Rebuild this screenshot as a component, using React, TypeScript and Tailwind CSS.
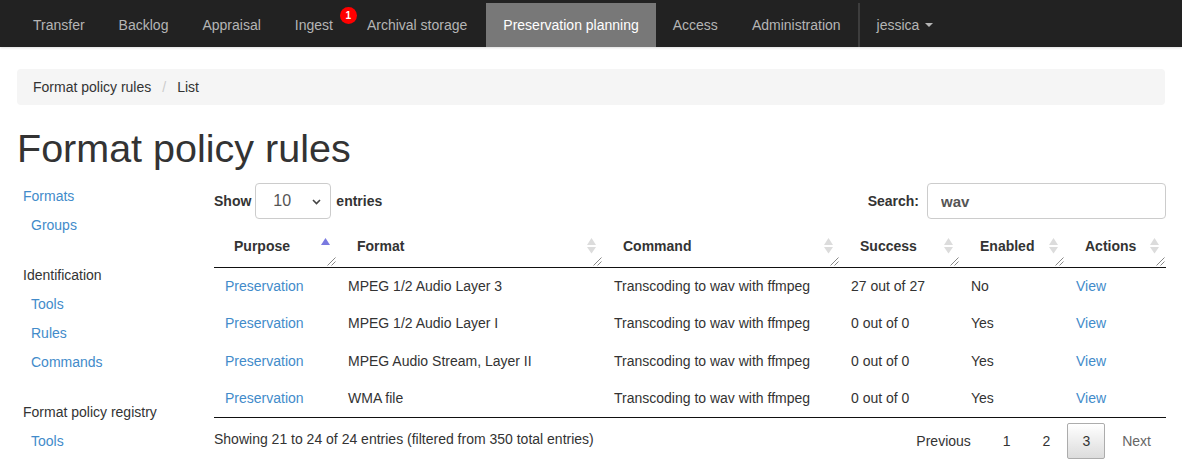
import React from 'react';

const navItems = [
  'Transfer',
  'Backlog',
  'Appraisal',
  'Ingest',
  'Archival storage',
  'Preservation planning',
  'Access',
  'Administration',
];

const sidebar = [
  { title: null, links: ['Formats'], sub: ['Groups'] },
  { title: 'Identification', links: [], sub: ['Tools', 'Rules', 'Commands'] },
  { title: 'Format policy registry', links: [], sub: ['Tools'] },
];

const columns = [
  { label: 'Purpose', width: 'w-[123px]', active: true },
  { label: 'Format', width: 'w-[266px]' },
  { label: 'Command', width: 'w-[237px]' },
  { label: 'Success', width: 'w-[120px]' },
  { label: 'Enabled', width: 'w-[105px]' },
  { label: 'Actions', width: 'w-[101px]' },
];

const rows = [
  ['MPEG 1/2 Audio Layer 3', '27 out of 27', 'No'],
  ['MPEG 1/2 Audio Layer I', '0 out of 0', 'Yes'],
  ['MPEG Audio Stream, Layer II', '0 out of 0', 'Yes'],
  ['WMA file', '0 out of 0', 'Yes'],
];

function SortIcon({ active }: { active?: boolean }) {
  return (
    <svg width="9" height="16" viewBox="0 0 9 16" className="absolute right-[7px] top-[11px]">
      <path d="M4.5 0 L9 7 L0 7 Z" fill={active ? '#7a7ae0' : '#dcdcdc'} />
      {!active && <path d="M0 9 L9 9 L4.5 15.5 Z" fill="#dcdcdc" />}
    </svg>
  );
}

function ResizeHandle() {
  return (
    <svg width="9" height="9" viewBox="0 0 9 9" className="absolute right-[1px] bottom-[1px]">
      <path d="M8.5 0.5 L0.5 8.5 M8.5 4.5 L4.5 8.5" stroke="#888" strokeWidth="1" />
    </svg>
  );
}

export default function App() {
  return (
    <div className="min-h-screen bg-white text-[14px] text-[#333] font-['Liberation_Sans',Arial,Helvetica,sans-serif]">
      {/* top navbar */}
      <nav className="h-[47px] bg-[#222] flex pl-4 shadow-[0_1px_2px_rgba(0,0,0,0.12)]">
        <ul className="flex h-full pt-[3px]">
          {navItems.map((item) => {
            const active = item === 'Preservation planning';
            return (
              <li
                key={item}
                className={`relative h-full flex items-center px-[17px] ${
                  active ? 'ml-[2px] px-[17.5px] bg-[#787878] text-white' : 'text-[#b5b5b5]'
                }`}
              >
                {item}
                {item === 'Ingest' && (
                  <span className="absolute left-[62px] top-[4px] w-[17px] h-[17px] rounded-full bg-[#f00] text-white text-[10px] font-bold flex items-center justify-center">
                    1
                  </span>
                )}
              </li>
            );
          })}
          <li className="w-[2px] h-full bg-[#3d3d3d]" />
          <li className="h-full flex items-center px-[17px] text-[#b5b5b5]">
            jessica
            <span className="inline-block w-0 h-0 ml-[6px] border-x-4 border-x-transparent border-t-4 border-t-[#b5b5b5]" />
          </li>
        </ul>
      </nav>

      <div className="px-[17px]">
        {/* breadcrumb */}
        <div className="mt-[22px] h-[36px] rounded-[4px] bg-[#f5f5f5] px-4 flex items-center leading-[20px]">
          <span>Format policy rules</span>
          <span className="mx-[11px] text-[#ccc]">/</span>
          <span>List</span>
        </div>

        <h1 className="mt-[22px] text-[39.5px] leading-[43px] font-normal text-[#333]">Format policy rules</h1>

        <div className="flex mt-[12px]">
          {/* sidebar */}
          <aside className="w-[197px] shrink-0">
            {sidebar.map((group, i) => (
              <div key={i} className="mb-[21px]">
                {group.title && <div className="h-[29px] flex items-center pl-[6px]">{group.title}</div>}
                {group.links.map((l) => (
                  <div key={l} className="h-[29px] flex items-center pl-[6px] text-[#428bca]">
                    {l}
                  </div>
                ))}
                {group.sub.map((l) => (
                  <div key={l} className="h-[29px] flex items-center pl-[14px] text-[#428bca]">
                    {l}
                  </div>
                ))}
              </div>
            ))}
          </aside>

          {/* main */}
          <main className="flex-1 pt-[1px]">
            <div className="flex items-center justify-between h-[36px]">
              <div className="flex items-center font-bold">
                <span>Show</span>
                <div className="relative ml-[4px] w-[76px] h-[36px] border border-[#ccc] rounded-[4px] flex items-center pl-[17px] text-[16px] font-normal text-[#555]">
                  10
                  <svg width="9" height="6" viewBox="0 0 9 6" className="absolute right-[9px] top-[15px]">
                    <path d="M1 1 L4.5 4.5 L8 1" stroke="#444" strokeWidth="1.6" fill="none" />
                  </svg>
                </div>
                <span className="ml-[5px]">entries</span>
              </div>
              <div className="flex items-center font-bold">
                <span>Search:</span>
                <input
                  readOnly
                  value="wav"
                  className="ml-[8px] w-[239px] h-[36px] border border-[#ccc] rounded-[4px] px-[13px] text-[15px] font-bold text-[#555] outline-none"
                />
              </div>
            </div>

            <table className="mt-[8px] w-full table-fixed border-collapse">
              <thead>
                <tr>
                  {columns.map((c) => (
                    <th
                      key={c.label}
                      className={`${c.width} relative text-left font-bold pl-[20px] pt-[9px] pb-[11px] leading-[20px] border-b border-[#111]`}
                    >
                      {c.label}
                      <SortIcon active={c.active} />
                      <ResizeHandle />
                    </th>
                  ))}
                </tr>
              </thead>
              <tbody>
                {rows.map((r, i) => (
                  <tr key={i} className={`h-[37.5px] ${i === rows.length - 1 ? 'border-b border-[#111]' : ''}`}>
                    <td className="pl-[11px] text-[#428bca]">Preservation</td>
                    <td className="pl-[11px]">{r[0]}</td>
                    <td className="pl-[11px]">Transcoding to wav with ffmpeg</td>
                    <td className="pl-[11px]">{r[1]}</td>
                    <td className="pl-[11px]">{r[2]}</td>
                    <td className="pl-[11px] text-[#428bca]">View</td>
                  </tr>
                ))}
              </tbody>
            </table>

            <div className="flex justify-between items-start">
              <div className="pt-[11px] leading-[20px]">Showing 21 to 24 of 24 entries (filtered from 350 total entries)</div>
              <div className="pt-[5px] flex leading-[20px]">
                <span className="ml-[2px] px-[14px] py-[7px] border border-transparent text-[#333]">Previous</span>
                <span className="ml-[2px] px-[14px] py-[7px] border border-transparent text-[#333]">1</span>
                <span className="ml-[2px] px-[14px] py-[7px] border border-transparent text-[#333]">2</span>
                <span className="ml-[2px] px-[14px] py-[7px] border border-[#acacac] rounded-[2px] bg-linear-to-b from-white to-[#dcdcdc] text-[#333]">
                  3
                </span>
                <span className="ml-[2px] px-[14px] py-[7px] border border-transparent text-[#666]">Next</span>
              </div>
            </div>
          </main>
        </div>
      </div>
    </div>
  );
}
